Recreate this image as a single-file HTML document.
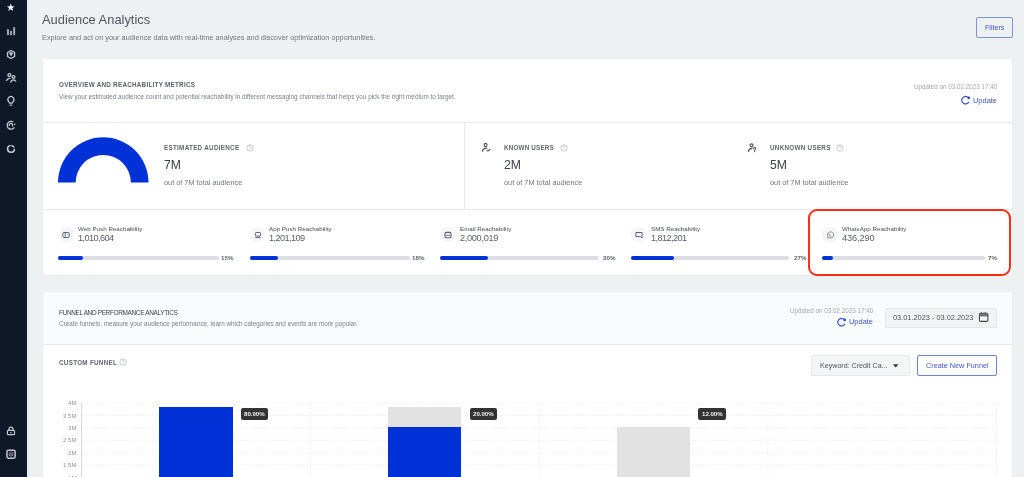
<!DOCTYPE html>
<html><head><meta charset="utf-8"><style>
html,body{margin:0;padding:0;width:1024px;height:477px;overflow:hidden;background:#edf1f2}
.t{position:absolute;white-space:nowrap;font-family:"Liberation Sans", sans-serif;will-change:transform}
svg{overflow:visible}
</style></head><body>
<div style="position:absolute;left:0px;top:0px;width:1024px;height:477px;background:#edf1f2"></div><div style="position:absolute;left:0px;top:0px;width:27px;height:477px;background:#0e1828"></div><div style="position:absolute;left:27px;top:0px;width:4px;height:477px;background:linear-gradient(to right,#e6ecf6,#edf1f2)"></div><svg style="position:absolute;left:0px;top:0px" width="27" height="477" viewBox="0 0 27 477">
<path d="M10.7 3.6 L11.7 6.3 L14.5 6.4 L12.3 8.1 L13.1 10.9 L10.7 9.3 L8.3 10.9 L9.1 8.1 L6.9 6.4 L9.7 6.3 Z" fill="#ffffff"/>
<rect x="6.9" y="28.9" width="2.1" height="6.4" rx="0.8" fill="#9ba1ae"/>
<rect x="9.95" y="30.8" width="2.1" height="4.5" rx="0.8" fill="#9ba1ae"/>
<rect x="13.05" y="26.9" width="2.1" height="8.4" rx="0.8" fill="#9ba1ae"/>
<path d="M11.05 50.45 L14.6 52.45 L14.6 56.45 L11.05 58.45 L7.5 56.45 L7.5 52.45 Z" fill="none" stroke="#c3c7cf" stroke-width="1.3" stroke-linejoin="round"/>
<path d="M9.1 52.9 Q11.05 52.2 13 52.9 L11.05 55.9 Z" fill="#c3c7cf" stroke="#c3c7cf" stroke-width="0.5" stroke-linejoin="round"/>
<circle cx="9.4" cy="75.1" r="1.45" fill="none" stroke="#c3c7cf" stroke-width="1.3"/>
<path d="M6.4 80.9 Q7.2 78.3 10.3 78.4" fill="none" stroke="#c3c7cf" stroke-width="1.3"/>
<circle cx="13.5" cy="77" r="1.45" fill="none" stroke="#c3c7cf" stroke-width="1.3"/>
<path d="M10.6 82.6 Q11.3 79.9 13.6 79.9 Q15.3 80 15.8 81.6" fill="none" stroke="#c3c7cf" stroke-width="1.3"/>
<path d="M9.6 103.2 Q9.5 102.3 8.6 101.5 A3 3 0 1 1 13.2 101.5 Q12.3 102.3 12.2 103.2 Z" fill="none" stroke="#c3c7cf" stroke-width="1.2"/>
<rect x="9.5" y="104.6" width="2.8" height="1.1" fill="#c3c7cf"/>
<path d="M13.3 122.0 A3.95 3.95 0 1 0 14.5 127.2" fill="none" stroke="#c3c7cf" stroke-width="1.25"/>
<circle cx="14.7" cy="124.3" r="0.8" fill="#c3c7cf"/>
<path d="M9.38 125.97 A1.75 1.75 0 1 1 12.02 126.44" fill="none" stroke="#c3c7cf" stroke-width="1.2"/>
<path d="M14.40 148.73 A3.4 3.4 0 1 1 10.59 145.48" fill="none" stroke="#c3c7cf" stroke-width="1.6"/>
<path d="M11.36 145.47 A3.4 3.4 0 0 1 14.11 147.47" fill="none" stroke="#c3c7cf" stroke-width="1.6"/>
<rect x="7.4" y="430.3" width="7.1" height="4.4" rx="1" fill="none" stroke="#c3c7cf" stroke-width="1.2"/>
<path d="M9 430.2 V429 A1.95 1.95 0 0 1 12.9 429 V430.2" fill="none" stroke="#c3c7cf" stroke-width="1.3"/>
<rect x="10.3" y="432" width="1.3" height="1.2" fill="#c3c7cf"/>
<rect x="6.95" y="450.25" width="8.2" height="7.9" rx="1.4" fill="none" stroke="#c3c7cf" stroke-width="1.5"/>
<path d="M11.05 451.5 V457 M8.3 454.2 H13.8" stroke="#8a8f99" stroke-width="0.8"/>
<circle cx="9.5" cy="452.8" r="0.6" fill="#c3c7cf"/><circle cx="12.6" cy="452.8" r="0.6" fill="#c3c7cf"/><circle cx="9.5" cy="455.6" r="0.6" fill="#c3c7cf"/><circle cx="12.6" cy="455.6" r="0.6" fill="#c3c7cf"/>
</svg><div class="t" style="left:42.00px;top:13.78px;font-size:12.9px;line-height:12.9px;color:#50555f;font-weight:400;letter-spacing:0px;">Audience Analytics</div><div class="t" style="left:42.30px;top:34.38px;font-size:7.35px;line-height:7.35px;color:#71767f;font-weight:400;letter-spacing:0px;">Explore and act on your audience data with real-time analyses and discover optimization opportunities.</div><div style="position:absolute;left:976.2px;top:17px;width:37px;height:21px;border:1px solid #8091d8;border-radius:2px;box-sizing:border-box"></div><div class="t" style="left:985.30px;top:25.09px;font-size:7.1px;line-height:7.1px;color:#4259c4;font-weight:400;letter-spacing:0px;">Filters</div><div style="position:absolute;left:43px;top:59px;width:969px;height:216px;background:#fff;box-shadow:0 0 1px rgba(0,0,0,0.1)"></div><div class="t" style="left:58.60px;top:82.07px;font-size:6.3px;line-height:6.3px;color:#5a5f68;font-weight:700;letter-spacing:0.26px;">OVERVIEW AND REACHABILITY METRICS</div><div class="t" style="left:58.60px;top:93.79px;font-size:6.39px;line-height:6.39px;color:#7b7f88;font-weight:400;letter-spacing:0px;">View your estimated audience count and potential reachability in different messaging channels that helps you pick the right medium to target.</div><div class="t" style="right:27.00px;top:84.27px;font-size:6.29px;line-height:6.29px;color:#a3a7ae;font-weight:400;letter-spacing:0px;">Updated on 03.02.2023 17:40</div><div class="t" style="right:27.00px;top:96.70px;font-size:7.44px;line-height:7.44px;color:#3d55c8;font-weight:400;letter-spacing:0px;">Update</div><svg style="position:absolute;left:958px;top:94px" width="14" height="14" viewBox="0 0 14 14"><path d="M9.65 3.13 A3.75 3.75 0 1 0 10.9 7.78" fill="none" stroke="#3a52c6" stroke-width="1.25"/><circle cx="10.7" cy="3.9" r="1.35" fill="#2a45c8"/></svg><div style="position:absolute;left:43px;top:122px;width:969px;height:1px;background:#e6e8ea"></div><div style="position:absolute;left:464px;top:122px;width:1px;height:87px;background:#e6e8ea"></div><div style="position:absolute;left:43px;top:208.5px;width:969px;height:1px;background:#e6e8ea"></div><svg style="position:absolute;left:58px;top:137px" width="91" height="46" viewBox="0 0 91 46"><path d="M0 45.5 A45.25 45.25 0 0 1 90.5 45.5 L72.85 45.5 A27.6 27.6 0 0 0 17.65 45.5 Z" fill="#0031d6"/></svg><div class="t" style="left:164.00px;top:145.17px;font-size:6.3px;line-height:6.3px;color:#62666f;font-weight:700;letter-spacing:0.28px;">ESTIMATED AUDIENCE</div><svg style="position:absolute;left:246px;top:143.6px" width="8" height="8" viewBox="0 0 8 8"><circle cx="4" cy="4" r="3.2" fill="none" stroke="#b4b8be" stroke-width="0.7"/><path d="M3 3.1 A1 1 0 1 1 4.2 4.1 L4 4.8" fill="none" stroke="#b4b8be" stroke-width="0.6"/><circle cx="4" cy="5.8" r="0.35" fill="#b4b8be"/></svg><div class="t" style="left:164.00px;top:158.97px;font-size:12.2px;line-height:12.2px;color:#3c4048;font-weight:400;letter-spacing:0px;">7M</div><div class="t" style="left:164.00px;top:179.49px;font-size:7.33px;line-height:7.33px;color:#71767f;font-weight:400;letter-spacing:0px;">out of 7M total audience</div><div class="t" style="left:503.70px;top:145.17px;font-size:6.3px;line-height:6.3px;color:#62666f;font-weight:700;letter-spacing:0.18px;">KNOWN USERS</div><svg style="position:absolute;left:559.7px;top:143.6px" width="8" height="8" viewBox="0 0 8 8"><circle cx="4" cy="4" r="3.2" fill="none" stroke="#b4b8be" stroke-width="0.7"/><path d="M3 3.1 A1 1 0 1 1 4.2 4.1 L4 4.8" fill="none" stroke="#b4b8be" stroke-width="0.6"/><circle cx="4" cy="5.8" r="0.35" fill="#b4b8be"/></svg><div class="t" style="left:503.70px;top:158.97px;font-size:12.2px;line-height:12.2px;color:#3c4048;font-weight:400;letter-spacing:0px;">2M</div><div class="t" style="left:503.70px;top:179.49px;font-size:7.33px;line-height:7.33px;color:#71767f;font-weight:400;letter-spacing:0px;">out of 7M total audience</div><svg style="position:absolute;left:478px;top:140px" width="16" height="16" viewBox="0 0 16 16"><ellipse cx="7.55" cy="5.0" rx="1.4" ry="1.65" fill="none" stroke="#55595f" stroke-width="1.25"/><path d="M4.4 11.2 Q4.9 8.3 8.9 8.2" fill="none" stroke="#55595f" stroke-width="1.3" stroke-linecap="round"/><path d="M9.1 10.6 Q9.9 11.5 11.9 9.4" fill="none" stroke="#55595f" stroke-width="1.3" stroke-linecap="round"/></svg><div class="t" style="left:769.60px;top:145.17px;font-size:6.3px;line-height:6.3px;color:#62666f;font-weight:700;letter-spacing:0.28px;">UNKNOWN USERS</div><svg style="position:absolute;left:836.2px;top:143.6px" width="8" height="8" viewBox="0 0 8 8"><circle cx="4" cy="4" r="3.2" fill="none" stroke="#b4b8be" stroke-width="0.7"/><path d="M3 3.1 A1 1 0 1 1 4.2 4.1 L4 4.8" fill="none" stroke="#b4b8be" stroke-width="0.6"/><circle cx="4" cy="5.8" r="0.35" fill="#b4b8be"/></svg><div class="t" style="left:769.60px;top:158.97px;font-size:12.2px;line-height:12.2px;color:#3c4048;font-weight:400;letter-spacing:0px;">5M</div><div class="t" style="left:769.60px;top:179.49px;font-size:7.33px;line-height:7.33px;color:#71767f;font-weight:400;letter-spacing:0px;">out of 7M total audience</div><svg style="position:absolute;left:744px;top:140px" width="16" height="16" viewBox="0 0 16 16"><circle cx="7.55" cy="5.3" r="1.5" fill="none" stroke="#55595f" stroke-width="1.25"/><path d="M4.4 11.3 Q5.0 8.6 8.0 8.3" fill="none" stroke="#55595f" stroke-width="1.3" stroke-linecap="round"/><path d="M9.5 8.7 A1.05 1.05 0 1 1 11.2 9.4 Q10.6 9.8 10.6 10.5 V11.7" fill="none" stroke="#55595f" stroke-width="1.1" stroke-linecap="round"/></svg><div style="position:absolute;left:58.5px;top:226.8px;width:15.6px;height:15.6px;background:#f5f6f9;border-radius:6.5px"></div><svg style="position:absolute;left:61.10000000000001px;top:229.9px" width="10" height="10" viewBox="0 0 10 10"><g transform="translate(5 5)"><rect x="-3.2" y="-2.5" width="6.4" height="5" rx="1.3" fill="none" stroke="#5f6472" stroke-width="1"/><path d="M-0.8 -2.5 V2.5" stroke="#5f6472" stroke-width="0.9"/><path d="M0.9 -0.6 H2" stroke="#9a9eaa" stroke-width="0.7"/></g></svg><div class="t" style="left:77.90px;top:226.02px;font-size:6.24px;line-height:6.24px;color:#474c55;font-weight:400;letter-spacing:0px;">Web Push Reachability</div><div class="t" style="left:77.90px;top:234.41px;font-size:9.2px;line-height:9.2px;color:#595e67;font-weight:400;letter-spacing:-0.6px;">1,010,604</div><div style="position:absolute;left:58.2px;top:256px;width:160.60000000000002px;height:4px;background:#dcdde6;border-radius:2px"></div><div style="position:absolute;left:58.2px;top:256px;width:24.5px;height:4px;background:#0031d6;border-radius:2px"></div><div class="t" style="right:790.30px;top:255.25px;font-size:6.2px;line-height:6.2px;color:#5f636b;font-weight:700;letter-spacing:0px;">15%</div><div style="position:absolute;left:249.9px;top:226.8px;width:15.6px;height:15.6px;background:#f5f6f9;border-radius:6.5px"></div><svg style="position:absolute;left:252.5px;top:229.9px" width="10" height="10" viewBox="0 0 10 10"><g transform="translate(5 5)"><rect x="-2.6" y="-2.5" width="5.2" height="3.6" rx="0.8" fill="none" stroke="#5f6472" stroke-width="1"/><path d="M-2.9 2.6 H2.9" stroke="#5f6472" stroke-width="0.9"/></g></svg><div class="t" style="left:269.30px;top:226.02px;font-size:6.24px;line-height:6.24px;color:#474c55;font-weight:400;letter-spacing:0px;">App Push Reachability</div><div class="t" style="left:269.30px;top:234.41px;font-size:9.2px;line-height:9.2px;color:#595e67;font-weight:400;letter-spacing:-0.6px;">1,201,109</div><div style="position:absolute;left:249.6px;top:256px;width:160.4px;height:4px;background:#dcdde6;border-radius:2px"></div><div style="position:absolute;left:249.6px;top:256px;width:28.700000000000017px;height:4px;background:#0031d6;border-radius:2px"></div><div class="t" style="right:599.80px;top:255.25px;font-size:6.2px;line-height:6.2px;color:#5f636b;font-weight:700;letter-spacing:0px;">18%</div><div style="position:absolute;left:440.40000000000003px;top:226.8px;width:15.6px;height:15.6px;background:#f5f6f9;border-radius:6.5px"></div><svg style="position:absolute;left:443.0px;top:229.9px" width="10" height="10" viewBox="0 0 10 10"><g transform="translate(5 5)"><rect x="-3.0" y="-2.6" width="6.0" height="5.4" rx="1.3" fill="none" stroke="#5f6472" stroke-width="1.1"/><path d="M-2.4 0.3 H2.4" stroke="#5f6472" stroke-width="0.9"/></g></svg><div class="t" style="left:459.80px;top:226.02px;font-size:6.24px;line-height:6.24px;color:#474c55;font-weight:400;letter-spacing:0px;">Email Reachability</div><div class="t" style="left:459.80px;top:234.41px;font-size:9.2px;line-height:9.2px;color:#595e67;font-weight:400;letter-spacing:-0.315px;">2,000,019</div><div style="position:absolute;left:440.1px;top:256px;width:158.69999999999993px;height:4px;background:#dcdde6;border-radius:2px"></div><div style="position:absolute;left:440.1px;top:256px;width:47.89999999999998px;height:4px;background:#0031d6;border-radius:2px"></div><div class="t" style="right:409.10px;top:255.25px;font-size:6.2px;line-height:6.2px;color:#5f636b;font-weight:700;letter-spacing:0px;">30%</div><div style="position:absolute;left:631.0999999999999px;top:226.8px;width:15.6px;height:15.6px;background:#f5f6f9;border-radius:6.5px"></div><svg style="position:absolute;left:633.6999999999999px;top:229.9px" width="10" height="10" viewBox="0 0 10 10"><g transform="translate(5 5)"><path d="M-3.1 -2.5 H3.1 V3.1 L1.6 1.6 H-3.1 Z" fill="none" stroke="#5f6472" stroke-width="1" stroke-linejoin="round"/></g></svg><div class="t" style="left:650.50px;top:226.02px;font-size:6.24px;line-height:6.24px;color:#474c55;font-weight:400;letter-spacing:0px;">SMS Reachability</div><div class="t" style="left:650.50px;top:234.41px;font-size:9.2px;line-height:9.2px;color:#595e67;font-weight:400;letter-spacing:-0.6px;">1,812,201</div><div style="position:absolute;left:630.8px;top:256px;width:158.20000000000005px;height:4px;background:#dcdde6;border-radius:2px"></div><div style="position:absolute;left:630.8px;top:256px;width:43.40000000000009px;height:4px;background:#0031d6;border-radius:2px"></div><div class="t" style="right:217.90px;top:255.25px;font-size:6.2px;line-height:6.2px;color:#5f636b;font-weight:700;letter-spacing:0px;">27%</div><div style="position:absolute;left:822.3px;top:226.8px;width:15.6px;height:15.6px;background:#f5f6f9;border-radius:6.5px"></div><svg style="position:absolute;left:824.9px;top:229.9px" width="10" height="10" viewBox="0 0 10 10"><g transform="translate(5 5)"><path d="M-2.4 2.9 L-2.0 1.7 A3.1 3.1 0 1 1 -0.9 2.7 Z" fill="none" stroke="#6a6f7c" stroke-width="0.75" stroke-linejoin="round"/><path d="M-1.2 -1.4 Q-0.9 0.9 1.4 1.3" fill="none" stroke="#6a6f7c" stroke-width="0.8"/></g></svg><div class="t" style="left:841.70px;top:226.02px;font-size:6.24px;line-height:6.24px;color:#474c55;font-weight:400;letter-spacing:0px;">WhatsApp Reachability</div><div class="t" style="left:841.70px;top:234.41px;font-size:9.2px;line-height:9.2px;color:#595e67;font-weight:400;letter-spacing:-0.091px;">436,290</div><div style="position:absolute;left:822px;top:256px;width:162.79999999999995px;height:4px;background:#dcdde6;border-radius:2px"></div><div style="position:absolute;left:822px;top:256px;width:11.299999999999955px;height:4px;background:#0031d6;border-radius:2px"></div><div class="t" style="right:27.00px;top:255.25px;font-size:6.2px;line-height:6.2px;color:#5f636b;font-weight:700;letter-spacing:0px;">7%</div><div style="position:absolute;left:808.2px;top:209.3px;width:203.3px;height:67px;border:2px solid #ff2c14;border-radius:9px;box-sizing:border-box"></div><div style="position:absolute;left:43px;top:291.5px;width:969px;height:186px;background:#fff;box-shadow:0 0 1px rgba(0,0,0,0.08)"></div><div style="position:absolute;left:43px;top:291.5px;width:969px;height:52px;background:#f9fcfd"></div><div style="position:absolute;left:43px;top:343.5px;width:969px;height:1px;background:#e6e8ea"></div><div class="t" style="left:58.80px;top:309.54px;font-size:6.45px;line-height:6.45px;color:#3d4149;font-weight:400;letter-spacing:-0.33px;">FUNNEL AND PERFORMANCE ANALYTICS</div><div class="t" style="left:58.80px;top:320.93px;font-size:6.34px;line-height:6.34px;color:#7b7f88;font-weight:400;letter-spacing:0px;">Create funnels, measure your audience performance, learn which categories and events are more popular.</div><div class="t" style="right:150.70px;top:308.37px;font-size:6.29px;line-height:6.29px;color:#a3a7ae;font-weight:400;letter-spacing:0px;">Updated on 03.02.2023 17:40</div><div class="t" style="right:150.70px;top:318.40px;font-size:7.44px;line-height:7.44px;color:#3d55c8;font-weight:400;letter-spacing:0px;">Update</div><svg style="position:absolute;left:833.6px;top:315.7px" width="14" height="14" viewBox="0 0 14 14"><path d="M9.65 3.13 A3.75 3.75 0 1 0 10.9 7.78" fill="none" stroke="#3a52c6" stroke-width="1.25"/><circle cx="10.7" cy="3.9" r="1.35" fill="#2a45c8"/></svg><div style="position:absolute;left:884.5px;top:308px;width:112.5px;height:20px;background:#f2f3f5;border:1px solid #e4e6ea;border-radius:2px;box-sizing:border-box"></div><div class="t" style="left:892.80px;top:314.24px;font-size:7.39px;line-height:7.39px;color:#4a4f59;font-weight:400;letter-spacing:0px;">03.01.2023 - 03.02.2023</div><svg style="position:absolute;left:975px;top:309px" width="16" height="16" viewBox="0 0 16 16"><rect x="4.45" y="4.3" width="8.4" height="8.1" rx="1.2" fill="none" stroke="#44484f" stroke-width="1.1"/><rect x="4.2" y="4.0" width="8.9" height="3.4" fill="#5c6068"/><path d="M5 5.8 H12.3" stroke="#8d9097" stroke-width="0.8"/><path d="M6.4 3.2 V4 M10.3 3.2 V4" stroke="#44484f" stroke-width="0.9"/></svg><div class="t" style="left:58.60px;top:359.97px;font-size:6.3px;line-height:6.3px;color:#62666f;font-weight:700;letter-spacing:0.28px;">CUSTOM FUNNEL</div><svg style="position:absolute;left:119.4px;top:357.9px" width="8" height="8" viewBox="0 0 8 8"><circle cx="4" cy="4" r="3.2" fill="none" stroke="#b4b8be" stroke-width="0.7"/><path d="M3 3.1 A1 1 0 1 1 4.2 4.1 L4 4.8" fill="none" stroke="#b4b8be" stroke-width="0.6"/><circle cx="4" cy="5.8" r="0.35" fill="#b4b8be"/></svg><div style="position:absolute;left:811.3px;top:355.3px;width:98.4px;height:21px;background:#f4f5f7;border:1px solid #e6e8eb;border-radius:2px;box-sizing:border-box"></div><div class="t" style="left:819.50px;top:362.87px;font-size:7.12px;line-height:7.12px;color:#4d525c;font-weight:400;letter-spacing:0px;">Keyword: Credit Ca...</div><svg style="position:absolute;left:892px;top:363px" width="8" height="6" viewBox="0 0 8 6"><path d="M1 1.2 H6.4 L3.7 4.6 Z" fill="#2e3138"/></svg><div style="position:absolute;left:917.3px;top:355.3px;width:79.6px;height:21px;border:1px solid #6e80cf;border-radius:2px;box-sizing:border-box"></div><div class="t" style="left:926.10px;top:362.14px;font-size:7.27px;line-height:7.27px;color:#3f57c4;font-weight:400;letter-spacing:0px;">Create New Funnel</div><svg style="position:absolute;left:0px;top:0px" width="1024" height="477" viewBox="0 0 1024 477"><line x1="82" y1="403.1" x2="997" y2="403.1" stroke="#e0e0e0" stroke-width="0.7" stroke-dasharray="1 1.5"/><line x1="82" y1="415.5" x2="997" y2="415.5" stroke="#e0e0e0" stroke-width="0.7" stroke-dasharray="1 1.5"/><line x1="82" y1="427.9" x2="997" y2="427.9" stroke="#e0e0e0" stroke-width="0.7" stroke-dasharray="1 1.5"/><line x1="82" y1="440.3" x2="997" y2="440.3" stroke="#e0e0e0" stroke-width="0.7" stroke-dasharray="1 1.5"/><line x1="82" y1="452.7" x2="997" y2="452.7" stroke="#e0e0e0" stroke-width="0.7" stroke-dasharray="1 1.5"/><line x1="82" y1="465.1" x2="997" y2="465.1" stroke="#e0e0e0" stroke-width="0.7" stroke-dasharray="1 1.5"/><line x1="82" y1="477.5" x2="997" y2="477.5" stroke="#e0e0e0" stroke-width="0.7" stroke-dasharray="1 1.5"/><line x1="310.4" y1="403" x2="310.4" y2="477" stroke="#e0e0e0" stroke-width="0.7" stroke-dasharray="1 1.5"/><line x1="539.2" y1="403" x2="539.2" y2="477" stroke="#e0e0e0" stroke-width="0.7" stroke-dasharray="1 1.5"/><line x1="768" y1="403" x2="768" y2="477" stroke="#e0e0e0" stroke-width="0.7" stroke-dasharray="1 1.5"/><line x1="996.5" y1="403" x2="996.5" y2="477" stroke="#e0e0e0" stroke-width="0.7" stroke-dasharray="1 1.5"/></svg><div style="position:absolute;left:81px;top:402.7px;width:1px;height:75px;background:#d8d8d8"></div><div class="t" style="right:947.40px;top:400.24px;font-size:6.1px;line-height:6.1px;color:#959595;font-weight:400;letter-spacing:0px;">4M</div><div class="t" style="right:947.40px;top:412.64px;font-size:6.1px;line-height:6.1px;color:#959595;font-weight:400;letter-spacing:0px;">3.5M</div><div class="t" style="right:947.40px;top:425.04px;font-size:6.1px;line-height:6.1px;color:#959595;font-weight:400;letter-spacing:0px;">3M</div><div class="t" style="right:947.40px;top:437.44px;font-size:6.1px;line-height:6.1px;color:#959595;font-weight:400;letter-spacing:0px;">2.5M</div><div class="t" style="right:947.40px;top:449.84px;font-size:6.1px;line-height:6.1px;color:#959595;font-weight:400;letter-spacing:0px;">2M</div><div class="t" style="right:947.40px;top:462.24px;font-size:6.1px;line-height:6.1px;color:#959595;font-weight:400;letter-spacing:0px;">1.5M</div><div class="t" style="right:947.40px;top:474.64px;font-size:6.1px;line-height:6.1px;color:#959595;font-weight:400;letter-spacing:0px;">1M</div><div style="position:absolute;left:159px;top:407.4px;width:74px;height:70px;background:#0031d6"></div><div style="position:absolute;left:388px;top:407.4px;width:73px;height:19.2px;background:#e2e2e2"></div><div style="position:absolute;left:388px;top:426.6px;width:73px;height:51px;background:#0031d6"></div><div style="position:absolute;left:616.6px;top:427px;width:73.4px;height:50px;background:#e2e2e2"></div><div style="position:absolute;left:240.8px;top:408px;width:27.5px;height:12px;background:#333333;border-radius:2px"></div><div class="t" style="left:244.25px;top:411.34px;font-size:6.1px;line-height:6.1px;color:#f4f4f4;font-weight:700;letter-spacing:0px;">80.00%</div><div style="position:absolute;left:469.5px;top:408px;width:27.30000000000001px;height:12px;background:#333333;border-radius:2px"></div><div class="t" style="left:472.85px;top:411.34px;font-size:6.1px;line-height:6.1px;color:#f4f4f4;font-weight:700;letter-spacing:0px;">20.00%</div><div style="position:absolute;left:698px;top:408px;width:27.700000000000045px;height:12px;background:#333333;border-radius:2px"></div><div class="t" style="left:701.55px;top:411.34px;font-size:6.1px;line-height:6.1px;color:#f4f4f4;font-weight:700;letter-spacing:0px;">12.00%</div>
</body></html>
